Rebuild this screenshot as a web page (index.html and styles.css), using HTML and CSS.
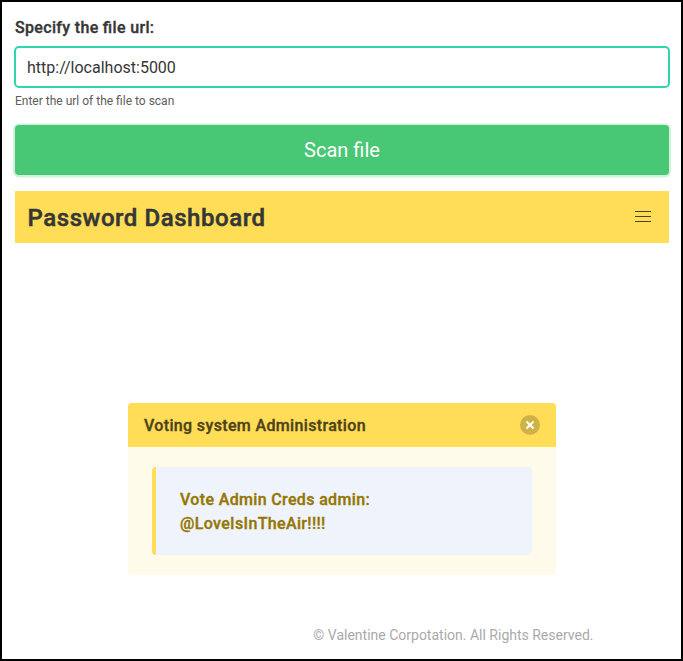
FILE: index.html
```html
<!DOCTYPE html>
<html lang="en">
<head>
<meta charset="utf-8">
<title>File scanner</title>
<link rel="stylesheet" href="styles.css">
</head>
<body>
<main class="page">
  <form class="form">
    <label class="label" for="url">Specify the file url:</label>
    <input class="input" id="url" type="text" value="http://localhost:5000">
    <p class="help">Enter the url of the file to scan</p>
    <button class="button" type="button">Scan file</button>
  </form>
  <nav class="navbar">
    <h1 class="brand">Password Dashboard</h1>
    <span class="burger"><span class="line"></span><span class="line"></span><span class="line"></span></span>
  </nav>
  <article class="message">
    <header class="message-header">
      <span>Voting system Administration</span>
      <button class="delete" type="button" aria-label="delete"></button>
    </header>
    <div class="message-body">
      <blockquote class="quote">Vote Admin Creds admin: @LoveIsInTheAir!!!!</blockquote>
    </div>
  </article>
  <footer class="footer">© Valentine Corpotation. All Rights Reserved.</footer>
</main>
</body>
</html>
```
FILE: styles.css
```css
* { box-sizing: border-box; margin: 0; padding: 0; }
body { background: #fff; color: #363636; font: 400 16px/24px Roboto, sans-serif; }
.page { height: 661px; border: 2px solid #000; padding: 14px 12px 0 13px; overflow: hidden; }
.label { display: block; font-weight: 500; letter-spacing: .33px; margin-bottom: 6px; font-feature-settings: "liga" 1; -webkit-text-stroke: .35px currentColor; }
.input { display: block; width: 656px; height: 42px; margin-left: -1px; padding: 0 11px; border: 2px solid #30d5ab; border-radius: 5px; background: #fff; color: #363636; font: inherit; outline: none; }
.help { margin-top: 4px; font-size: 12px; line-height: 18px; color: #5c5c5c; }
.button { display: block; width: 654px; height: 50px; margin-top: 15px; border: 0; border-radius: 4px; background: #48c774; color: #fff; font: 400 20px/50px Roboto, sans-serif; box-shadow: 0 .5px 0 2px rgba(72, 199, 116, .25); }
.navbar { display: flex; align-items: center; width: 654px; height: 52px; margin-top: 16px; padding: 0 12px; background: #ffdd57; }
.brand { padding: 1px 0 0 .5px; font-size: 24px; line-height: 36px; font-weight: 500; letter-spacing: .55px; -webkit-text-stroke: .5px currentColor; }
.burger { display: flex; flex-direction: column; gap: 4px; width: 16px; margin: 0 6px 2px auto; }
.line { height: 1px; background: rgba(0, 0, 0, .7); }
.message { width: 428px; height: 172px; margin: 160px 0 0 113px; border-radius: 4px; background: #fffbeb; }
.message-header { display: flex; align-items: center; justify-content: space-between; height: 44px; padding: 0 16px; border-radius: 4px 4px 0 0; background: #ffdd57; color: #4d421a; font-weight: 500; letter-spacing: .35px; -webkit-text-stroke: .35px currentColor; }
.message-header span { padding-top: 1px; }
.delete { position: relative; width: 20px; height: 20px; border: 0; border-radius: 50%; background: rgba(10, 10, 10, .2); }
.delete::before, .delete::after { content: ""; position: absolute; left: 5px; top: 9px; width: 10px; height: 2px; background: #fff; transform: rotate(45deg); }
.delete::after { transform: rotate(-45deg); }
.message-body { padding: 20px 24px; }
.quote { height: 88px; padding: 21px 24px 19px; border-left: 4px solid #ffdd57; border-radius: 4px; background: #eff3fc; color: #947600; font-weight: 500; letter-spacing: .35px; -webkit-text-stroke: .35px currentColor; }
.footer { margin: 48px 75.5px 0 0; text-align: right; font-size: 14px; line-height: 24px; color: #aaa; }
```
